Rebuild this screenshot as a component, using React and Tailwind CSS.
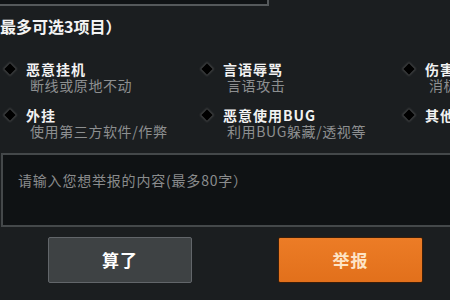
const reasons = [
    { title: '恶意挂机', desc: '断线或原地不动' },
    { title: '言语辱骂', desc: '言语攻击' },
    { title: '伤害', desc: '消极' },
    { title: '外挂', desc: '使用第三方软件/作弊' },
    { title: '恶意使用BUG', desc: '利用BUG躲藏/透视等' },
    { title: '其他', desc: '' },
];

function Reason({ title, desc }) {
    return (
        <div className="flex items-start pl-[6px] whitespace-nowrap">
            <span className="mt-[4px] w-[8px] h-[8px] shrink-0 rotate-45 bg-black shadow-[0_0_2px_1px_rgba(110,110,110,0.55)]" />
            <div className="ml-[12px] flex flex-col">
                <span className="text-[14px] leading-[16px] font-bold tracking-[1px] text-[#f2f2f2]">
                    {title}
                </span>
                {desc && (
                    <span className="ml-[4px] text-[14px] leading-[16px] tracking-[0.6px] text-[#8d8f90]">
                        {desc}
                    </span>
                )}
            </div>
        </div>
    );
}

export default function App() {
    return (
        <div
            className="w-[450px] h-[300px] overflow-hidden bg-[#1b1e20] flex flex-col"
            style={{ fontFamily: '"Noto Sans CJK SC", "Noto Sans", sans-serif' }}
        >
            <div className="h-[6px] w-[269px] shrink-0 bg-[#101315] border-r-2 border-b-2 border-[#55595b]" />

            <div className="mt-[10px] text-[16px] leading-[20px] font-bold text-[#f4f4f4] whitespace-nowrap">
                最多可选3项目）
            </div>

            <div className="mt-[25px] grid grid-cols-[197px_202px_1fr] gap-y-[14px]">
                {reasons.map((r) => (
                    <Reason key={r.title} title={r.title} desc={r.desc} />
                ))}
            </div>

            <div className="mt-[14px] ml-[1px] w-[460px] h-[74px] shrink-0 bg-[#0f1214] border-y-2 border-l-2 border-[#44484a] pl-[15px] pt-[12px]">
                <span className="text-[14px] leading-[20px] tracking-[0.8px] text-[#8a8c8d] whitespace-nowrap">
                    请输入您想举报的内容(最多80字）
                </span>
            </div>

            <div className="mt-[10px] flex">
                <button className="ml-[48px] w-[144px] h-[46px] rounded-[2px] bg-[#3e4244] border border-[#62666a] text-[17px] font-bold text-white tracking-[1px]">
                    算了
                </button>
                <button className="ml-[86px] w-[145px] h-[46px] rounded-[2px] bg-gradient-to-b from-[#ec7c26] to-[#e2701b] border border-[#3a1e0a] text-[17px] font-bold text-[#fde4c6] tracking-[1px]">
                    举报
                </button>
            </div>
        </div>
    );
}
